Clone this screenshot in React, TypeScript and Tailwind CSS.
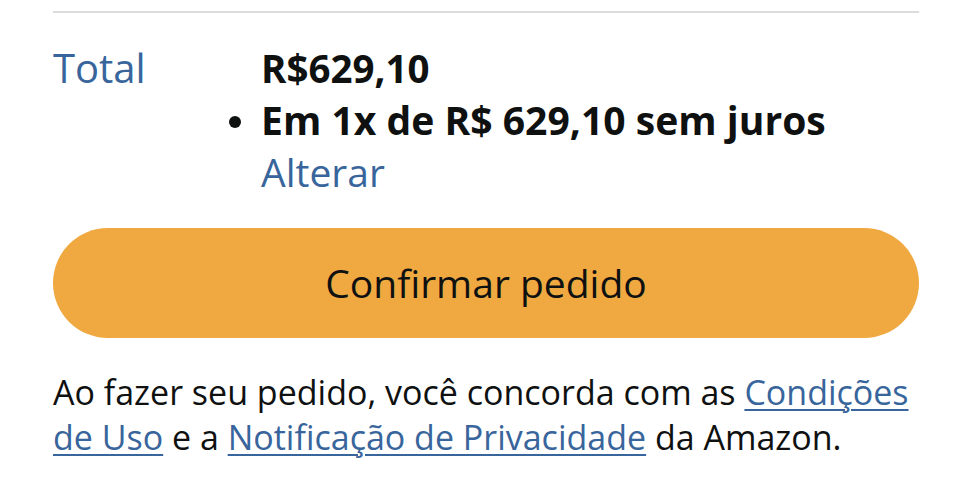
import React from "react";

export default function App() {
  const font = { fontFamily: '"Open Sans", "Noto Sans", sans-serif' };
  return (
    <div className="w-[972px] h-[500px] bg-white overflow-hidden" style={font}>
      <div className="px-[53px] pt-[11px]">
        <div className="h-[2px] w-[866px] bg-[#dddddd]" />
        <div className="flex mt-[29px]">
          <div className="w-[208px] text-[40px] leading-[52px] text-[#38659b]">Total</div>
          <div className="flex flex-col">
            <div className="text-[38.5px] leading-[52px] font-bold text-[#0f1111]">R$629,10</div>
            <div className="relative text-[39.1px] leading-[52px] font-bold text-[#0f1111] whitespace-nowrap">
              <span className="absolute left-[-32px] top-[22px] w-[12px] h-[12px] rounded-full bg-[#0f1111]" />
              Em 1x de R$ 629,10 sem juros
            </div>
            <div className="text-[39px] leading-[52px] text-[#38659b]">Alterar</div>
          </div>
        </div>
        <button className="mt-[30px] w-[866px] h-[110px] rounded-full bg-[#f0a941] text-[39px] text-[#0f1111] flex items-center justify-center">
          Confirmar pedido
        </button>
        <p className="mt-[32px] text-[34px] leading-[45px] text-[#0f1111]">
          Ao fazer seu pedido, você concorda com as{" "}
          <span className="text-[#38659b] underline underline-offset-[4px] decoration-[2px]">Condições de Uso</span> e a{" "}
          <span className="text-[#38659b] underline underline-offset-[4px] decoration-[2px]">Notificação de Privacidade</span> da Amazon.
        </p>
      </div>
    </div>
  );
}
